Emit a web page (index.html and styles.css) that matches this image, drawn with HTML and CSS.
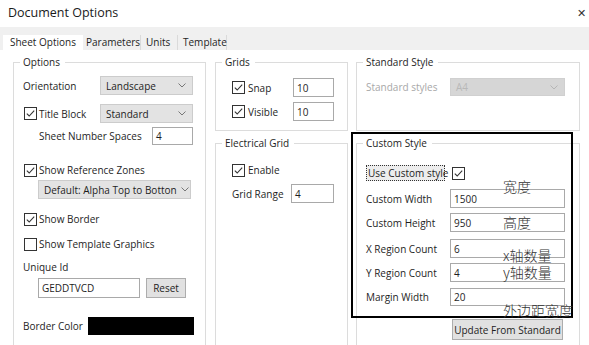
FILE: index.html
```html
<!DOCTYPE html>
<html>
<head>
<meta charset="utf-8">
<title>Document Options</title>
<link rel="stylesheet" href="styles.css">
</head>
<body>
<div class="dialog">
  <div class="titlebar">
    <span class="title">Document Options</span>
    <span class="close">&#x2715;</span>
  </div>
  <div class="tabs">
    <div class="tab t-sheet active">Sheet Options</div>
    <div class="tab t-params">Parameters</div>
    <div class="tab t-units">Units</div>
    <div class="tab t-tpl">Template</div>
  </div>
  <div class="page">
    <fieldset class="group g-options">
      <legend>Options</legend>
      <div class="row r-orient">
        <span class="lbl w77">Orientation</span>
        <div class="select w93"><span>Landscape</span><svg class="chev" width="8" height="5" viewBox="0 0 8 5"><path d="M0.5 0.5 L4 4 L7.5 0.5" fill="none" stroke="#777" stroke-width="1"/></svg></div>
      </div>
      <div class="row r-title">
        <span class="chk w76"><span class="cb"><svg width="11" height="11" viewBox="0 0 11 11"><path d="M1.8 5.6 L4.2 8 L9.2 2.6" fill="none" stroke="#333" stroke-width="1.1"/></svg></span><span>Title Block</span></span>
        <div class="select w93"><span>Standard</span><svg class="chev" width="8" height="5" viewBox="0 0 8 5"><path d="M0.5 0.5 L4 4 L7.5 0.5" fill="none" stroke="#777" stroke-width="1"/></svg></div>
      </div>
      <div class="row r-sns">
        <span class="lbl sns">Sheet Number Spaces</span>
        <div class="input w41">4</div>
      </div>
      <div class="row r-refz">
        <span class="chk ml1"><span class="cb"><svg width="11" height="11" viewBox="0 0 11 11"><path d="M1.8 5.6 L4.2 8 L9.2 2.6" fill="none" stroke="#333" stroke-width="1.1"/></svg></span><span>Show Reference Zones</span></span>
      </div>
      <div class="row r-refsel">
        <div class="select w153"><span>Default: Alpha Top to Botton</span><svg class="chev" width="8" height="5" viewBox="0 0 8 5"><path d="M0.5 0.5 L4 4 L7.5 0.5" fill="none" stroke="#777" stroke-width="1"/></svg></div>
      </div>
      <div class="row r-border">
        <span class="chk ml1"><span class="cb"><svg width="11" height="11" viewBox="0 0 11 11"><path d="M1.8 5.6 L4.2 8 L9.2 2.6" fill="none" stroke="#333" stroke-width="1.1"/></svg></span><span>Show Border</span></span>
      </div>
      <div class="row r-tplg">
        <span class="chk ml1"><span class="cb"></span><span>Show Template Graphics</span></span>
      </div>
      <div class="row r-uid">
        <span class="lbl">Unique Id</span>
      </div>
      <div class="row r-uidin">
        <div class="input w102">GEDDTVCD</div>
        <div class="btn w40">Reset</div>
      </div>
      <div class="row r-bcol">
        <span class="lbl w65">Border Color</span>
        <div class="swatch"></div>
      </div>
    </fieldset>

    <div class="col col-mid">
      <fieldset class="group g-grids">
        <legend>Grids</legend>
        <div class="row r-snap">
          <span class="chk w61"><span class="cb"><svg width="11" height="11" viewBox="0 0 11 11"><path d="M1.8 5.6 L4.2 8 L9.2 2.6" fill="none" stroke="#333" stroke-width="1.1"/></svg></span><span>Snap</span></span>
          <div class="input w41">10</div>
        </div>
        <div class="row r-vis">
          <span class="chk w61"><span class="cb"><svg width="11" height="11" viewBox="0 0 11 11"><path d="M1.8 5.6 L4.2 8 L9.2 2.6" fill="none" stroke="#333" stroke-width="1.1"/></svg></span><span>Visible</span></span>
          <div class="input w41">10</div>
        </div>
      </fieldset>
      <fieldset class="group g-elec">
        <legend>Electrical Grid</legend>
        <div class="row r-enable">
          <span class="chk"><span class="cb"><svg width="11" height="11" viewBox="0 0 11 11"><path d="M1.8 5.6 L4.2 8 L9.2 2.6" fill="none" stroke="#333" stroke-width="1.1"/></svg></span><span>Enable</span></span>
        </div>
        <div class="row r-grange">
          <span class="lbl w59">Grid Range</span>
          <div class="input w43">4</div>
        </div>
      </fieldset>
    </div>

    <div class="col col-right">
      <fieldset class="group g-std">
        <legend>Standard Style</legend>
        <div class="row r-stdsel">
          <span class="lbl w84 dis">Standard styles</span>
          <div class="select w115 disabled"><span>A4</span><svg class="chev" width="8" height="5" viewBox="0 0 8 5"><path d="M0.5 0.5 L4 4 L7.5 0.5" fill="none" stroke="#b5b5b5" stroke-width="1"/></svg></div>
        </div>
      </fieldset>
      <fieldset class="group g-custom">
        <legend>Custom Style</legend>
        <div class="row r-use">
          <span class="focus">Use Custom style</span>
          <span class="cb"><svg width="11" height="11" viewBox="0 0 11 11"><path d="M1.8 5.6 L4.2 8 L9.2 2.6" fill="none" stroke="#333" stroke-width="1.1"/></svg></span>
        </div>
        <div class="row r-cw">
          <span class="lbl w84">Custom Width</span>
          <div class="input w115">1500</div>
        </div>
        <div class="row r-ch">
          <span class="lbl w84">Custom Height</span>
          <div class="input w115">950</div>
        </div>
        <div class="row r-xr">
          <span class="lbl w84">X Region Count</span>
          <div class="input w115">6</div>
        </div>
        <div class="row r-yr">
          <span class="lbl w84">Y Region Count</span>
          <div class="input w115">4</div>
        </div>
        <div class="row r-mw">
          <span class="lbl w84">Margin Width</span>
          <div class="input w115">20</div>
        </div>
        <div class="row r-upd">
          <div class="btn w111">Update From Standard</div>
        </div>
      </fieldset>
    </div>
  </div>

  <div class="annot-box"></div>
  <span class="note n-w">宽度</span>
  <span class="note n-h">高度</span>
  <span class="note n-x">x轴数量</span>
  <span class="note n-y">y轴数量</span>
  <span class="note n-m">外边距宽度</span>
</div>
</body>
</html>
```

FILE: styles.css
```css
* { box-sizing: border-box; }
html, body { margin: 0; padding: 0; }
body {
  width: 589px;
  height: 345px;
  overflow: hidden;
  background: #ffffff;
  font-family: "Open Sans", "Noto Sans", sans-serif;
  font-size: 10px;
  color: #1e1e1e;
}
.dialog { position: relative; width: 589px; height: 345px; overflow: hidden; }

.titlebar {
  height: 27px;
  display: flex;
  align-items: center;
  justify-content: space-between;
  padding: 0 3px 3px 8px;
}
.title { font-size: 12.5px; color: #1a1a1a; }
.close { font-size: 11px; color: #333; }

.tabs {
  height: 23px;
  background: #f0f0f0;
  display: flex;
  align-items: flex-end;
  padding-left: 3px;
}
.tab {
  height: 15px;
  line-height: 14px;
  padding: 0 0 0 6px;
  color: #1e1e1e;
  border-right: 1px solid #dadada;
}
.t-sheet { width: 80px; padding-left: 7px; }
.t-params { width: 58px; padding-left: 3px; }
.t-units { width: 37px; padding-left: 5px; }
.t-tpl { width: 49px; padding-left: 5px; }
.tab.active { background: #ffffff; border-right: none; }

.page {
  display: flex;
  align-items: flex-start;
  padding: 5px 0 0 13px;
}
.col { display: flex; flex-direction: column; }
.col-mid { width: 133px; margin-left: 9px; }
.col-right { width: 224px; margin-left: 8px; }

.group {
  margin: 0;
  padding: 0 9px;
  border: 1px solid #dcdcdc;
  min-width: 0;
}
.group legend {
  padding: 0 5px 0 3px;
  margin-left: -3px;
  height: 15px;
  line-height: 15px;
  color: #1e1e1e;
}
.g-options { width: 193px; height: 300px; }
.g-grids { height: 76px; }
.g-elec { height: 220px; margin-top: 5px; }
.g-std { height: 76px; }
.g-custom { height: 220px; margin-top: 5px; }

.row { display: flex; align-items: center; }
.lbl { white-space: nowrap; }
.dis { color: #a8a8a8; }
.w59 { width: 59px; flex: none; }
.w65 { width: 65px; flex: none; }
.w76 { width: 76px; flex: none; }
.w77 { width: 77px; flex: none; }
.w84 { width: 84px; flex: none; }
.w61 { width: 61px; flex: none; }
.ml1 { margin-left: 1px; }

.chk { display: flex; align-items: center; white-space: nowrap; }
.cb {
  width: 13px;
  height: 13px;
  flex: none;
  border: 1px solid #333;
  background: #fff;
  margin-right: 2px;
  display: flex;
  align-items: center;
  justify-content: center;
}
.cb svg { display: block; }

.select {
  height: 100%;
  flex: none;
  display: flex;
  align-items: center;
  justify-content: space-between;
  background: #e3e3e3;
  border: 1px solid #cccccc;
  padding: 0 6px 0 5px;
  white-space: nowrap;
}
.select.disabled { background: #d6d6d6; border-color: #d0d0d0; color: #b8b8b8; }
.chev { flex: none; margin-left: 4px; }

.input {
  height: 100%;
  flex: none;
  background: #fff;
  border: 1px solid #a9a9a9;
  padding: 0 3px;
  display: flex;
  align-items: center;
  white-space: nowrap;
}
.btn {
  height: 100%;
  flex: none;
  background: #e1e1e1;
  border: 1px solid #adadad;
  display: flex;
  align-items: center;
  justify-content: center;
  white-space: nowrap;
}
.swatch { width: 106px; height: 100%; background: #000; flex: none; }

.w41 { width: 41px; }
.w43 { width: 43px; }
.w93 { width: 93px; }
.w102 { width: 102px; }
.w40 { width: 40px; margin-left: 6px; }
.w111 { width: 111px; }
.w115 { width: 115px; }
.w153 { width: 153px; }

/* Options rows */
.r-orient { margin-top: 6px; height: 19px; }
.r-title { margin-top: 9px; height: 19px; }
.r-title .chk { margin-left: 1px; }
.r-sns { margin-top: 4px; height: 18px; }
.sns { width: 129px; padding-left: 16px; flex: none; }
.r-refz { margin-top: 18px; height: 14px; }
.r-refsel { margin-top: 3px; height: 19px; padding-left: 15px; }
.r-border { margin-top: 13px; height: 14px; }
.r-tplg { margin-top: 11px; height: 14px; }
.r-uid { margin-top: 9px; height: 14px; }
.r-uidin { margin-top: 4px; height: 20px; padding-left: 15px; }
.r-bcol { margin-top: 19px; height: 18px; }

/* Grids */
.r-snap { margin-top: 8px; height: 19px; padding-left: 7px; }
.r-snap .cb, .r-vis .cb, .r-enable .cb { margin-right: 3px; }
.r-vis { margin-top: 5px; height: 19px; padding-left: 7px; }
.r-enable { margin-top: 12px; height: 14px; padding-left: 7px; }
.r-grange { margin-top: 7px; height: 19px; padding-left: 7px; }

/* Standard */
.r-stdsel { margin-top: 8px; height: 18px; }

/* Custom */
.r-use { margin-top: 14px; height: 16px; }
.focus {
  width: 79px;
  height: 16px;
  flex: none;
  border: 1px dotted #333;
  background: #ededed;
  display: flex;
  align-items: center;
  padding-left: 1px;
  margin-right: 7px;
  white-space: nowrap;
}
.r-cw { margin-top: 8px; height: 19px; }
.r-ch { margin-top: 5px; height: 19px; }
.r-xr { margin-top: 7px; height: 19px; }
.r-yr { margin-top: 5px; height: 19px; }
.r-mw { margin-top: 6px; height: 18px; }
.r-upd { margin-top: 13px; height: 21px; padding-left: 86px; }

/* annotations drawn over the screenshot */
.annot-box {
  position: absolute;
  left: 351px;
  top: 132px;
  width: 222px;
  height: 186px;
  border: 2px solid #000;
}
.note {
  position: absolute;
  left: 503px;
  font-family: "Noto Sans CJK SC", sans-serif;
  font-weight: 300;
  font-size: 14px;
  line-height: 15px;
  height: 15px;
  color: #333;
  white-space: nowrap;
}
.n-w { top: 179px; }
.n-h { top: 215px; }
.n-x { top: 248px; }
.n-y { top: 265px; }
.n-m { top: 303px; }
```
